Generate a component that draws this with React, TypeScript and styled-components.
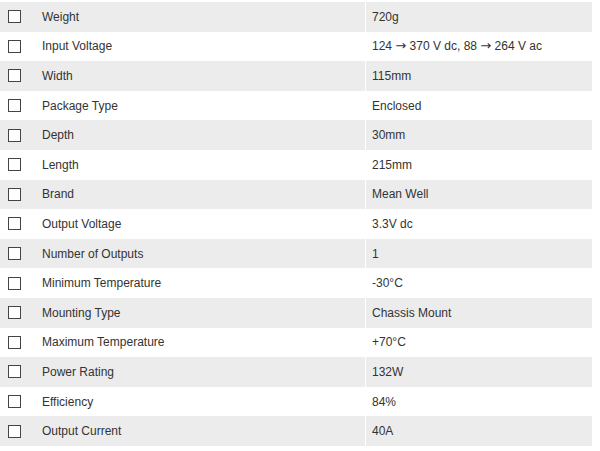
import React from "react";
import styled, { createGlobalStyle } from "styled-components";

const Global = createGlobalStyle`
  html, body { margin: 0; padding: 0; background: #fff; }
  body { font-family: Arial, "Liberation Sans", sans-serif; }
`;

const Table = styled.div`
  width: 592px;
  padding-top: 2px;
  display: flex;
  flex-direction: column;
`;

const Row = styled.div<{ $shade: boolean }>`
  height: 29.6px;
  display: grid;
  grid-template-columns: 365px 1px 1fr;
  align-items: center;
  background: ${(p) => (p.$shade ? "#ececec" : "#ffffff")};
`;

const NameCell = styled.div`
  display: flex;
  align-items: center;
  height: 100%;
`;

const Box = styled.span`
  box-sizing: border-box;
  width: 13px;
  height: 13px;
  margin-left: 8px;
  border: 1.5px solid #444;
  background: #fff;
  flex: none;
`;

const Label = styled.span`
  margin-left: 21px;
  font-size: 12px;
  color: #333;
`;

const Divider = styled.div`
  height: 100%;
  background: #fff;
`;

const Value = styled.div`
  padding-left: 6px;
  font-size: 12px;
  color: #333;
  white-space: nowrap;
`;

const Arrow = styled.span`
  font-family: "DejaVu Sans", sans-serif;
  font-size: 13px;
  line-height: 1;
`;

const data: [string, string][] = [
  ["Weight", "720g"],
  ["Input Voltage", "124 \u2192 370 V dc, 88 \u2192 264 V ac"],
  ["Width", "115mm"],
  ["Package Type", "Enclosed"],
  ["Depth", "30mm"],
  ["Length", "215mm"],
  ["Brand", "Mean Well"],
  ["Output Voltage", "3.3V dc"],
  ["Number of Outputs", "1"],
  ["Minimum Temperature", "-30\u00b0C"],
  ["Mounting Type", "Chassis Mount"],
  ["Maximum Temperature", "+70\u00b0C"],
  ["Power Rating", "132W"],
  ["Efficiency", "84%"],
  ["Output Current", "40A"],
];

function renderValue(v: string) {
  const parts = v.split("\u2192");
  return parts.map((p, i) => (
    <React.Fragment key={i}>
      {i > 0 && <Arrow>{"\u2192"}</Arrow>}
      {p}
    </React.Fragment>
  ));
}

export default function App() {
  return (
    <>
      <Global />
      <Table>
        {data.map(([k, v], i) => (
          <Row key={k} $shade={i % 2 === 0}>
            <NameCell>
              <Box />
              <Label>{k}</Label>
            </NameCell>
            <Divider />
            <Value>{renderValue(v)}</Value>
          </Row>
        ))}
      </Table>
    </>
  );
}
